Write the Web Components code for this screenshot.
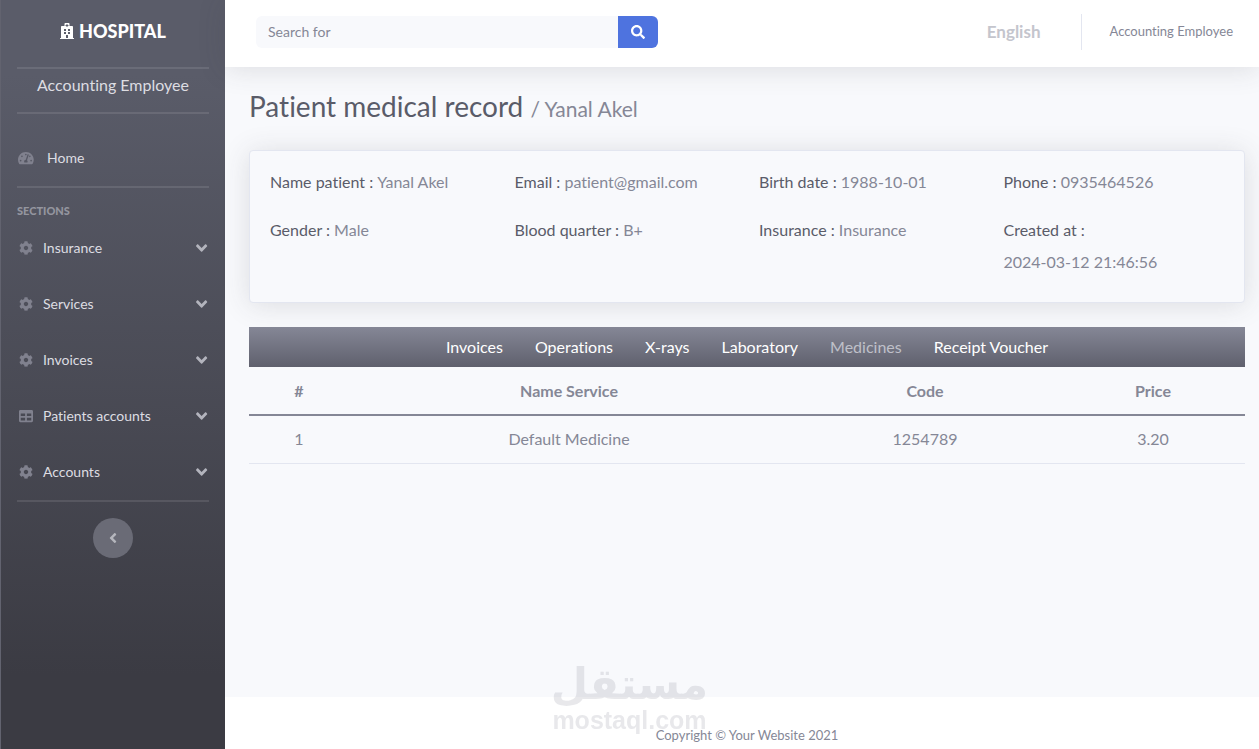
<!DOCTYPE html>
<html lang="en">
<head>
<meta charset="utf-8">
<meta name="viewport" content="width=device-width, initial-scale=1">
<title>Patient medical record</title>
<style>
  body { margin: 0; font-family: Lato, "Open Sans", sans-serif; font-size: 16px; line-height: 24px; font-variant-ligatures: no-common-ligatures; color: #858796; background: #f8f9fc; }
</style>
</head>
<body>
<hospital-app></hospital-app>

<script>
const ICONS = {
  hospital: ['0 0 448 512', 'M448 492v20H0v-20c0-6.627 5.373-12 12-12h20V120c0-13.255 10.745-24 24-24h88V24c0-13.255 10.745-24 24-24h112c13.255 0 24 10.745 24 24v72h88c13.255 0 24 10.745 24 24v360h20c6.627 0 12 5.373 12 12zM308 192h-40c-6.627 0-12 5.373-12 12v40c0 6.627 5.373 12 12 12h40c6.627 0 12-5.373 12-12v-40c0-6.627-5.373-12-12-12zm-168 64h40c6.627 0 12-5.373 12-12v-40c0-6.627-5.373-12-12-12h-40c-6.627 0-12 5.373-12 12v40c0 6.627 5.373 12 12 12zm104 128h-40c-6.627 0-12 5.373-12 12v84h64v-84c0-6.627-5.373-12-12-12zm64-96h-40c-6.627 0-12 5.373-12 12v40c0 6.627 5.373 12 12 12h40c6.627 0 12-5.373 12-12v-40c0-6.627-5.373-12-12-12zm-116 12c0-6.627-5.373-12-12-12h-40c-6.627 0-12 5.373-12 12v40c0 6.627 5.373 12 12 12h40c6.627 0 12-5.373 12-12v-40zM182 96h26v26a6 6 0 0 0 6 6h20a6 6 0 0 0 6-6V96h26a6 6 0 0 0 6-6V70a6 6 0 0 0-6-6h-26V38a6 6 0 0 0-6-6h-20a6 6 0 0 0-6 6v26h-26a6 6 0 0 0-6 6v20a6 6 0 0 0 6 6z'],
  gauge: ['0 0 576 512', 'M288 32C128.94 32 0 160.94 0 320c0 52.8 14.25 102.26 39.06 144.8 5.61 9.62 16.3 15.2 27.44 15.2h443c11.14 0 21.83-5.58 27.44-15.2C561.75 422.26 576 372.8 576 320c0-159.06-128.94-288-288-288zm0 64c14.71 0 26.58 10.13 30.32 23.65-1.11 2.26-2.64 4.23-3.45 6.67l-9.22 27.67c-5.13 3.49-10.97 6.01-17.64 6.01-17.67 0-32-14.33-32-32S270.33 96 288 96zM96 384c-17.67 0-32-14.33-32-32s14.33-32 32-32 32 14.33 32 32-14.33 32-32 32zm48-160c-17.67 0-32-14.33-32-32s14.33-32 32-32 32 14.33 32 32-14.33 32-32 32zm246.77-72.41l-61.33 184C343.13 347.33 352 364.54 352 384c0 11.72-3.38 22.55-8.88 32H232.88c-5.5-9.45-8.88-20.28-8.88-32 0-33.94 26.5-61.43 59.9-63.59l61.34-184.01c4.17-12.56 17.73-19.45 30.36-15.17 12.57 4.19 19.35 17.79 15.17 30.36zm14.66 57.2l15.52-46.55c3.47-1.29 7.13-2.23 11.05-2.23 17.67 0 32 14.33 32 32s-14.33 32-32 32c-11.38-.01-20.89-6.28-26.57-15.22zM480 384c-17.67 0-32-14.33-32-32s14.33-32 32-32 32 14.33 32 32-14.33 32-32 32z'],
  cog: ['0 0 512 512', 'M487.4 315.7l-42.6-24.6c4.3-23.2 4.3-47 0-70.2l42.6-24.6c4.9-2.8 7.1-8.6 5.5-14-11.1-35.6-30-67.8-54.7-94.6-3.8-4.1-10-5.1-14.8-2.3L380.8 110c-17.9-15.4-38.5-27.3-60.8-35.1V25.8c0-5.6-3.9-10.5-9.4-11.7-36.7-8.2-74.3-7.8-109.2 0-5.5 1.2-9.4 6.1-9.4 11.7V75c-22.2 7.9-42.8 19.8-60.8 35.1L88.7 85.5c-4.9-2.8-11-1.9-14.8 2.3-24.7 26.7-43.6 58.9-54.7 94.6-1.7 5.4.6 11.2 5.5 14L67.3 221c-4.3 23.2-4.3 47 0 70.2l-42.6 24.6c-4.9 2.8-7.1 8.6-5.5 14 11.1 35.6 30 67.8 54.7 94.6 3.8 4.1 10 5.1 14.8 2.3l42.6-24.6c17.9 15.4 38.5 27.3 60.8 35.1v49.2c0 5.6 3.9 10.5 9.4 11.7 36.7 8.2 74.3 7.8 109.2 0 5.5-1.2 9.4-6.1 9.4-11.7v-49.2c22.2-7.9 42.8-19.8 60.8-35.1l42.6 24.6c4.9 2.8 11 1.9 14.8-2.3 24.7-26.7 43.6-58.9 54.7-94.6 1.5-5.5-.7-11.3-5.6-14.1zM256 336c-44.1 0-80-35.9-80-80s35.9-80 80-80 80 35.9 80 80-35.9 80-80 80z'],
  table: ['0 0 512 512', 'M464 32H48C21.49 32 0 53.49 0 80v352c0 26.51 21.49 48 48 48h416c26.51 0 48-21.49 48-48V80c0-26.51-21.49-48-48-48zM224 416H64v-96h160v96zm0-160H64v-96h160v96zm224 160H288v-96h160v96zm0-160H288v-96h160v96z'],
  search: ['0 0 512 512', 'M505 442.7L405.3 343c-4.5-4.5-10.6-7-17-7H372c27.6-35.3 44-79.7 44-128C416 93.1 322.9 0 208 0S0 93.1 0 208s93.1 208 208 208c48.3 0 92.7-16.4 128-44v16.3c0 6.4 2.5 12.5 7 17l99.7 99.7c9.4 9.4 24.6 9.4 33.9 0l28.3-28.3c9.4-9.4 9.4-24.6.1-34zM208 336c-70.7 0-128-57.2-128-128 0-70.7 57.2-128 128-128 70.7 0 128 57.2 128 128 0 70.7-57.2 128-128 128z'],
  down: ['0 0 320 512', 'M143 352.3L7 216.3c-9.4-9.4-9.4-24.6 0-33.9l22.6-22.6c9.4-9.4 24.6-9.4 33.9 0l96.4 96.4 96.4-96.4c9.4-9.4 24.6-9.4 33.9 0l22.6 22.6c9.4 9.4 9.4 24.6 0 33.9l-136 136c-9.2 9.4-24.4 9.4-33.8 0z'],
  left: ['0 0 256 512', 'M31.7 239l136-136c9.4-9.4 24.6-9.4 33.9 0l22.6 22.6c9.4 9.4 9.4 24.6 0 33.9L127.9 256l96.4 96.4c9.4 9.4 9.4 24.6 0 33.9L201.7 409c-9.4 9.4-24.6 9.4-33.9 0l-136-136c-9.5-9.4-9.5-24.6-.1-34z']
};

/* Registers an element whose shadow root is cloned from one template. */
function component(name, html, setup) {
  const template = document.createElement('template');
  template.innerHTML = html;
  customElements.define(name, class extends HTMLElement {
    constructor() {
      super();
      this.attachShadow({ mode: 'open' }).append(template.content.cloneNode(true));
    }
    connectedCallback() { if (setup) setup(this, this.shadowRoot); }
  });
}

component('app-icon', `
<style>
  :host { display: inline-flex; justify-content: center; flex: none; }
  svg { display: block; height: var(--icon-size, 14px); fill: currentColor; }
</style>
<svg aria-hidden="true"><path/></svg>`, (host, root) => {
  const [box, d] = ICONS[host.getAttribute('name')];
  const [, , w, h] = box.split(' ').map(Number);
  const svg = root.querySelector('svg');
  svg.setAttribute('viewBox', box);
  svg.style.aspectRatio = w + ' / ' + h;
  root.querySelector('path').setAttribute('d', d);
});

component('side-divider', `
<style>
  :host { display: block; margin: 0 16px; border-top: 2px solid rgba(255,255,255,.1); }
</style>`);

component('side-item', `
<style>
  :host { display: block; }
  button { display: flex; align-items: center; gap: 8px; box-sizing: border-box; width: 100%; height: 56px; padding: 0 17px 0 16px; border: 0; background: none; color: #dddde2; font: inherit; font-size: 14px; text-align: left; cursor: pointer; }
  app-icon { width: 18px; color: #80818e; }
  .label { flex: 1; }
  .arrow { width: 12px; --icon-size: 18px; color: #b3b4bd; }
</style>
<button type="button" aria-expanded="false"><app-icon name="cog"></app-icon><span class="label"><slot></slot></span><app-icon class="arrow" name="down"></app-icon></button>`, (host, root) => {
  if (host.hasAttribute('icon')) {
    const icon = document.createElement('app-icon');
    icon.setAttribute('name', host.getAttribute('icon'));
    root.querySelector('app-icon').replaceWith(icon);
  }
});

component('side-bar', `
<style>
  :host { display: block; box-sizing: border-box; width: 225px; flex: none; border-left: 1px solid #62636f; background: linear-gradient(180deg, #5a5c69 10%, #3b3b43 90%); color: #fff; }
  .brand { display: flex; align-items: center; justify-content: center; gap: 5px; height: 62px; margin-bottom: 5px; color: #fff; font-size: 18px; font-weight: 900; text-decoration: none; }
  .brand app-icon { --icon-size: 16px; }
  .role { margin: 0; padding: 4px 0 15px; text-align: center; font-size: 16px; line-height: 24px; color: #dddde2; }
  .home { display: flex; align-items: center; gap: 12px; height: 56px; margin: 16px 0 0; padding: 0 16px; color: #dddde2; font-size: 14px; text-decoration: none; }
  .home app-icon { width: 18px; color: #80818e; }
  h2 { margin: 16px 16px 2px; font-size: 11px; line-height: 14px; font-weight: 900; color: #94959f; }
  .toggle { display: flex; align-items: center; justify-content: center; width: 40px; height: 40px; margin: 16px auto; padding: 0; border: 0; border-radius: 50%; background: #6a6b76; color: #b5b6bd; cursor: pointer; }
  .toggle app-icon { --icon-size: 16px; }
</style>
<a class="brand" href="#"><app-icon name="hospital"></app-icon><span>HOSPITAL</span></a>
<side-divider></side-divider>
<p class="role">Accounting Employee</p>
<side-divider></side-divider>
<nav>
  <a class="home" href="#"><app-icon name="gauge"></app-icon><span>Home</span></a>
  <side-divider></side-divider>
  <h2>SECTIONS</h2>
  <side-item>Insurance</side-item>
  <side-item>Services</side-item>
  <side-item>Invoices</side-item>
  <side-item icon="table">Patients accounts</side-item>
  <side-item>Accounts</side-item>
</nav>
<side-divider></side-divider>
<button class="toggle" type="button" aria-label="Collapse sidebar"><app-icon name="left"></app-icon></button>`);

component('top-bar', `
<style>
  :host { display: flex; align-items: center; box-sizing: border-box; min-height: 67px; padding: 0 26px 3px 31px; background: #fff; box-shadow: 0 2px 28px rgba(58,59,69,.15); }
  form { display: flex; flex: 0 1 402px; min-width: 0; }
  input { flex: 1; min-width: 0; box-sizing: border-box; height: 32px; padding: 0 12px 2px; border: 0; border-radius: 6px 0 0 6px; background: #f8f9fc; color: #6e707e; font: inherit; font-size: 14px; }
  input::placeholder { color: #858796; opacity: 1; }
  button { display: flex; align-items: center; justify-content: center; width: 40px; height: 32px; padding: 0; border: 0; border-radius: 0 6px 6px 0; background: #4e73df; color: #fff; cursor: pointer; }
  .right { display: flex; align-items: center; margin-left: auto; }
  a { text-decoration: none; white-space: nowrap; }
  .lang { color: #c4c5cd; font-size: 17px; font-weight: 700; }
  .user { box-sizing: border-box; height: 36px; margin-left: 40px; padding-left: 28px; border-left: 1px solid #e3e6f0; color: #858796; font-size: 13px; line-height: 34px; }
</style>
<form role="search">
  <input type="search" placeholder="Search for" aria-label="Search for">
  <button type="submit" aria-label="Search"><app-icon name="search"></app-icon></button>
</form>
<div class="right"><a class="lang" href="#">English</a><a class="user" href="#">Accounting Employee</a></div>`);

component('record-field', `
<style>
  :host { display: block; padding: 0 12px; margin-bottom: 16px; line-height: 32px; color: #5a5c69; }
  .value { display: inline-block; color: #858796; }
</style>
<slot name="label"></slot> : <span class="value"><slot></slot></span>`);

component('record-card', `
<style>
  :host { display: grid; grid-template-columns: repeat(4, minmax(0, 1fr)); padding: 15px 8px 8px; border: 1px solid #e3e6f0; border-radius: 4px; background: #f8f9fc; box-shadow: 0 2px 28px rgba(58,59,69,.15); }
</style>
<slot></slot>`);

component('tab-strip', `
<style>
  :host { display: flex; justify-content: center; min-height: 40px; background: linear-gradient(180deg, #858796, #5f606d); }
</style>
<slot></slot>`);

component('tab-link', `
<style>
  :host { display: block; }
  a { display: block; padding: 8px 16px; color: #fff; text-decoration: none; }
  :host([active]) a { color: #bfc0c9; }
</style>
<a href="#"><slot></slot></a>`);

component('service-table', `
<style>
  :host { display: block; }
  table { width: 100%; border-collapse: collapse; table-layout: fixed; text-align: center; }
  .number { width: 100px; } .name { width: 440px; } .code { width: 272px; } .price { width: 184px; }
  th { padding: 12px 0 11px; border-bottom: 2px solid #858796; font-weight: 700; }
  td { padding: 11px 0 12px; border-bottom: 1px solid #e3e6f0; }
</style>
<table>
  <colgroup><col class="number"><col class="name"><col class="code"><col class="price"></colgroup>
  <thead><tr><th scope="col">#</th><th scope="col">Name Service</th><th scope="col">Code</th><th scope="col">Price</th></tr></thead>
  <tbody><tr><td>1</td><td>Default Medicine</td><td>1254789</td><td>3.20</td></tr></tbody>
</table>`);

component('page-footer', `
<style>
  :host { display: block; padding: 28px 14px 4px 24px; background: #fff; text-align: center; font-size: 13px; line-height: 20px; }
</style>
<slot></slot>`);

component('water-mark', `
<style>
  :host { position: fixed; left: 0; right: 0; bottom: 14px; display: flex; flex-direction: column; align-items: center; color: #858796; opacity: .19; font-weight: 700; pointer-events: none; }
  .arabic { font-family: "DejaVu Sans", sans-serif; font-size: 43px; line-height: 42px; }
  .latin { font-family: "Liberation Sans", sans-serif; font-size: 25px; line-height: 30px; }
</style>
<span class="arabic" lang="ar" dir="rtl">مستقل</span>
<span class="latin">mostaql.com</span>`);

component('hospital-app', `
<style>
  :host { display: flex; min-height: 100vh; }
  .page { display: flex; flex-direction: column; flex: 1; min-width: 0; }
  main { flex: 1; padding: 22px 14px 24px 24px; }
  h1 { margin: 0 0 24px; font-size: 28px; line-height: 34px; font-weight: 400; color: #5a5c69; }
  h1 small { font-size: 21px; color: #858796; }
  record-card { margin-bottom: 24px; }
</style>
<side-bar></side-bar>
<div class="page">
  <top-bar></top-bar>
  <main>
    <h1>Patient medical record <small>/ Yanal Akel</small></h1>
    <record-card>
      <record-field><span slot="label">Name patient</span>Yanal Akel</record-field>
      <record-field><span slot="label">Email</span>patient@gmail.com</record-field>
      <record-field><span slot="label">Birth date</span>1988-10-01</record-field>
      <record-field><span slot="label">Phone</span>0935464526</record-field>
      <record-field><span slot="label">Gender</span>Male</record-field>
      <record-field><span slot="label">Blood quarter</span>B+</record-field>
      <record-field><span slot="label">Insurance</span>Insurance</record-field>
      <record-field><span slot="label">Created at</span>2024-03-12 21:46:56</record-field>
    </record-card>
    <tab-strip>
      <tab-link>Invoices</tab-link><tab-link>Operations</tab-link><tab-link>X-rays</tab-link><tab-link>Laboratory</tab-link><tab-link active>Medicines</tab-link><tab-link>Receipt Voucher</tab-link>
    </tab-strip>
    <service-table></service-table>
  </main>
  <page-footer>Copyright © Your Website 2021</page-footer>
</div>
<water-mark></water-mark>`);
</script>
</body>
</html>
